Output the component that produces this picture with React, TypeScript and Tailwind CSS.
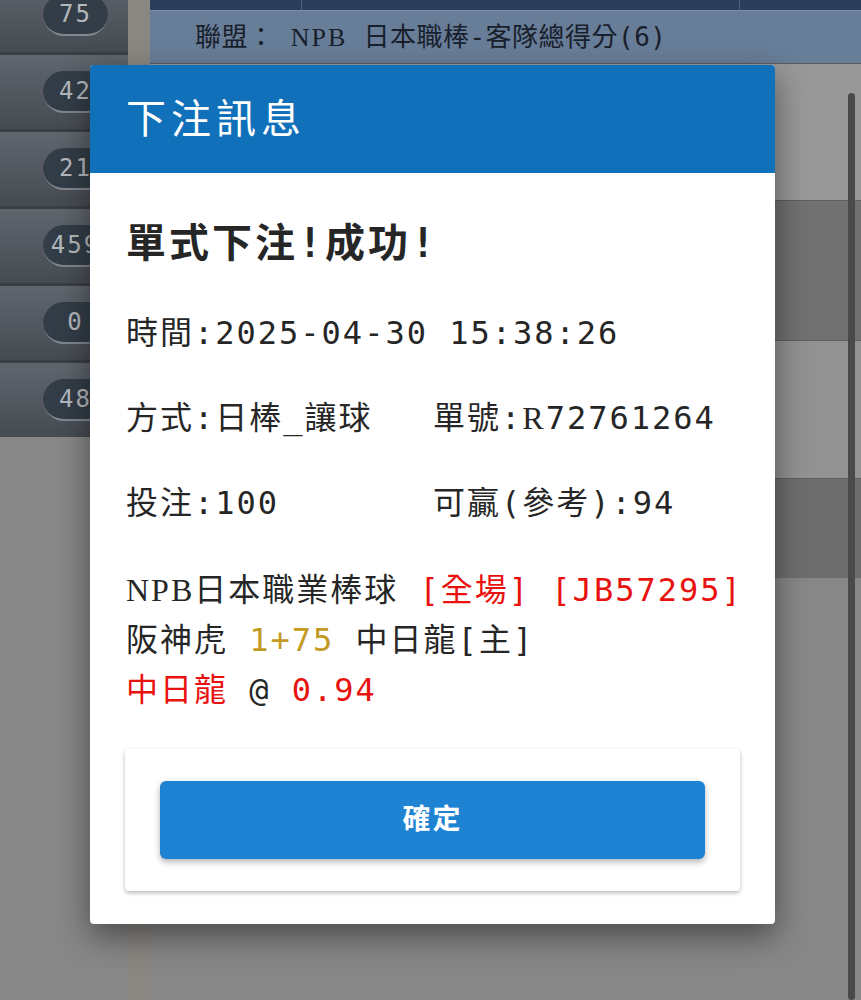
import React from 'react';

const counts = ['75', '42', '21', '459', '0', '48'];

const rows = [
  { h: 'h-[137px]', bg: 'bg-[#989898]' },
  { h: 'h-[140px]', bg: 'bg-[#717171]' },
  { h: 'h-[138px]', bg: 'bg-[#929292]' },
  { h: 'h-[100px]', bg: 'bg-[#6e6e6e]' },
];

const Serif = ({ children }: { children: React.ReactNode }) => (
  <span className="font-['Liberation_Serif',serif] tracking-[2px]">{children}</span>
);

const Red = ({ children }: { children: React.ReactNode }) => (
  <span className="text-[#e8120f]">{children}</span>
);

const BetResultModal = () => (
  <div className="absolute left-[90px] top-[65px] w-[685px] overflow-hidden rounded-[4px] bg-white shadow-[0_12px_32px_rgba(0,0,0,0.45)]">
    <div className="flex h-[108px] items-center bg-[#1170ba] pl-[36px] text-[40px] tracking-[5px] text-white">
      下注訊息
    </div>

    <div className="px-[35px] pb-[33px] text-[32px] tracking-[2px] text-[#262626]">
      <div className="mt-[45px] flex h-[50px] items-center pl-[1px] text-[40px] font-bold tracking-[3px]">
        單式下注!成功!
      </div>
      <div className="mt-[40px] flex h-[50px] items-center pl-[1px]">
        時間:2025-04-30 15:38:26
      </div>
      <div className="mt-[35px] grid h-[50px] grid-cols-2 items-center pl-[1px]">
        <span>方式:日棒_讓球</span>
        <span>
          單號:<Serif>R</Serif>72761264
        </span>
      </div>
      <div className="mt-[35px] grid h-[50px] grid-cols-2 items-center pl-[1px]">
        <span>投注:100</span>
        <span>可贏(參考):94</span>
      </div>

      <div className="mt-[37px] whitespace-pre pl-[1px] leading-[50px]">
        <div>
          <Serif>NPB</Serif>日本職業棒球 <Red>[全場]</Red> <Red>[JB57295]</Red>
        </div>
        <div>
          阪神虎 <span className="text-[#c29a24]">1+75</span> 中日龍[主]
        </div>
        <div>
          <Red>中日龍</Red> @ <Red>0.94</Red>
        </div>
      </div>

      <div className="mt-[34px] rounded-[4px] bg-white px-[35px] py-[32px] shadow-[0_2px_4px_rgba(0,0,0,0.28)]">
        <button
          type="button"
          className="flex h-[78px] w-full items-center justify-center rounded-[6px] bg-[#1f83d4] text-[28px] font-bold tracking-[2px] text-white shadow-[0_3px_6px_rgba(0,0,0,0.3)]"
        >
          確定
        </button>
      </div>
    </div>
  </div>
);

export default function App() {
  return (
    <div className="relative flex h-[1000px] w-[861px] overflow-hidden bg-[#878787] font-['DejaVu_Sans_Mono','Noto_Sans_CJK_TC',monospace]">
      {/* left counters */}
      <div className="-mt-[22px] flex w-[128px] shrink-0 flex-col gap-[3px] self-start bg-[#3a3f45]">
        {counts.map((n, i) => (
          <div
            key={i}
            className="flex h-[74px] items-center bg-gradient-to-b from-[#60666e] to-[#464b52]"
          >
            <div className="ml-[43px] flex h-[42px] w-[65px] items-center justify-center rounded-full border-b-[2px] border-[#80878e] bg-[#333d47] text-[24px] tracking-[2px] text-[#b3b8bd]">
              {n}
            </div>
          </div>
        ))}
      </div>

      <div className="w-[22px] shrink-0 bg-[#8a8682]" />

      {/* table behind the dialog */}
      <div className="flex flex-1 flex-col">
        <div className="flex h-[10px] bg-[#2b3d5b]">
          <div className="w-[152px] border-r border-[#4f6180]" />
          <div className="w-[438px] border-r border-[#4f6180]" />
          <div className="flex-1" />
        </div>
        <div className="flex h-[53px] items-center whitespace-pre border-t border-[#7b8ea6] bg-[#687d98] pl-[45px] text-[26px] tracking-[0.5px] text-[#18202b]">
          聯盟： <Serif>NPB</Serif> 日本職棒-客隊總得分(6)
        </div>
        {rows.map((r, i) => (
          <div key={i} className={`${r.h} ${r.bg} border-t border-[#5e5e5e]`} />
        ))}
      </div>

      <div className="absolute bottom-0 right-[6px] top-[93px] w-[7px] rounded-full bg-[#4a4a4a]" />

      <BetResultModal />
    </div>
  );
}
